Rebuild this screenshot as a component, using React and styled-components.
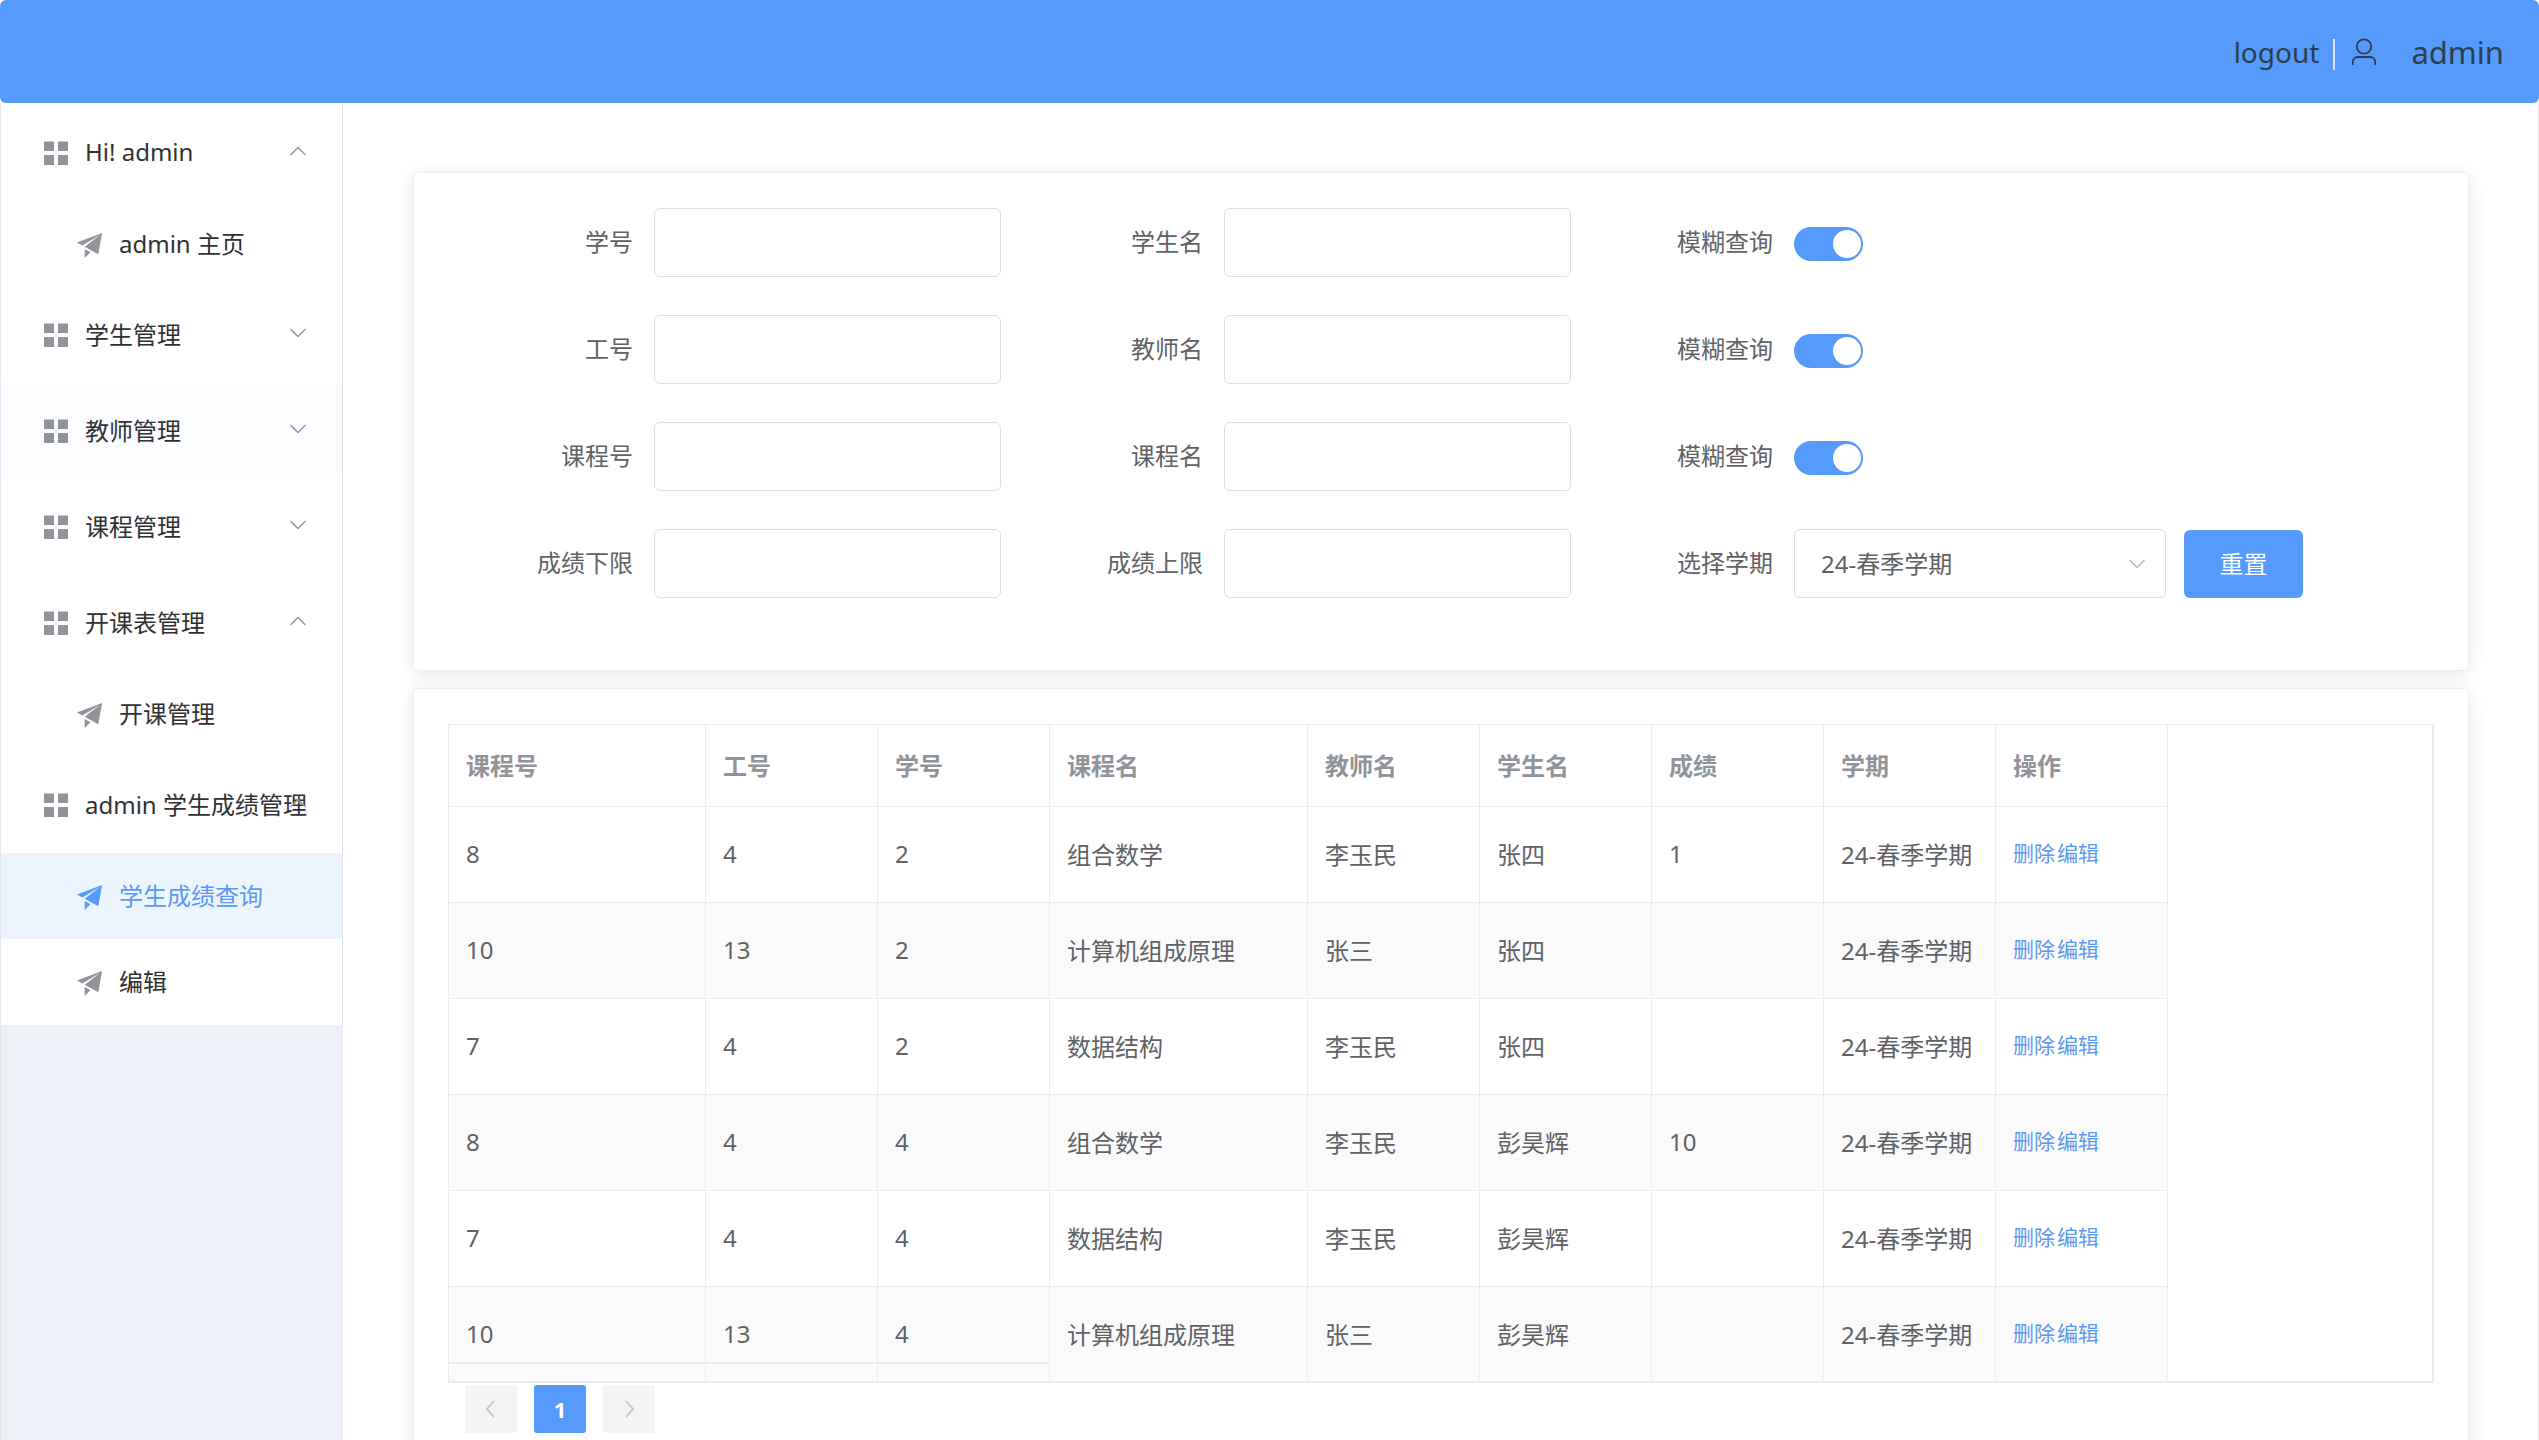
import React, { useState } from 'react'
import styled, { createGlobalStyle } from 'styled-components'

const menu = [
    { title: 'Hi! admin', open: true, items: ['admin 主页'] },
    { title: '学生管理', items: [] },
    { title: '教师管理', highlighted: true, items: [] },
    { title: '课程管理', items: [] },
    { title: '开课表管理', open: true, items: ['开课管理'] },
    { title: 'admin 学生成绩管理', open: true, items: ['学生成绩查询', '编辑'] },
]

const filters = [
    ['学号', '学生名'],
    ['工号', '教师名'],
    ['课程号', '课程名'],
    ['成绩下限', '成绩上限'],
]

const columns = [
    { label: '课程号', width: 257 },
    { label: '工号', width: 172 },
    { label: '学号', width: 172 },
    { label: '课程名', width: 258 },
    { label: '教师名', width: 172 },
    { label: '学生名', width: 172 },
    { label: '成绩', width: 172 },
    { label: '学期', width: 172 },
    { label: '操作', width: 172 },
]

const grades = [
    ['8', '4', '2', '组合数学', '李玉民', '张四', '1', '24-春季学期'],
    ['10', '13', '2', '计算机组成原理', '张三', '张四', '', '24-春季学期'],
    ['7', '4', '2', '数据结构', '李玉民', '张四', '', '24-春季学期'],
    ['8', '4', '4', '组合数学', '李玉民', '彭昊辉', '10', '24-春季学期'],
    ['7', '4', '4', '数据结构', '李玉民', '彭昊辉', '', '24-春季学期'],
    ['10', '13', '4', '计算机组成原理', '张三', '彭昊辉', '', '24-春季学期'],
]

const GridIcon = () => (
    <svg width="24" height="24" viewBox="0 0 24 24" fill="currentColor" aria-hidden="true">
        <rect x="0" y="0.500" width="10" height="9.500" rx="0.5" />
        <rect x="14" y="0.500" width="10" height="9.500" rx="0.5" />
        <rect x="0" y="14" width="10" height="10" rx="0.5" />
        <rect x="14" y="14" width="10" height="10" rx="0.5" />
    </svg>
)

const PlaneIcon = () => (
    <svg width="31" height="31" viewBox="0 0 1024 1024" fill="currentColor" aria-hidden="true">
        <path d="M64 448l832-320-128 704-446.080-243.328L832 192 242.816 545.472 64 448zm256 512V657.024L512 768 320 960z" />
    </svg>
)

const UserIcon = () => (
    <svg width="26" height="28" viewBox="0 0 26 28" fill="none" stroke="currentColor" strokeWidth="1.8" aria-hidden="true">
        <circle cx="13" cy="8.500" r="7.200" />
        <path d="M1.800 27v-3a5 5 0 0 1 5-5h12.400a5 5 0 0 1 5 5v3" />
    </svg>
)

const Chevron = () => (
    <svg width="18" height="10" viewBox="0 0 18 10" fill="none" stroke="currentColor" strokeWidth="1.4" aria-hidden="true">
        <path d="M1.500 1l7.500 7.500L16.500 1" />
    </svg>
)

const PagerArrow = ({ d }) => (
    <svg width="12" height="18" viewBox="0 0 12 18" fill="none" stroke="currentColor" strokeWidth="1.8" aria-hidden="true">
        <path d={d} />
    </svg>
)

function SideMenu() {
    return (
        <Sidebar>
            <Menu>
                {menu.map(({ title, open, highlighted, items }) => (
                    <React.Fragment key={title}>
                        <MenuTitle type="button" aria-expanded={!!open} $highlighted={highlighted}>
                            <GridIcon />
                            <MenuText>{title}</MenuText>
                            <MenuArrow $open={open}><Chevron /></MenuArrow>
                        </MenuTitle>
                        {items.map((item) => (
                            <MenuItem key={item} href="#" $active={item === '学生成绩查询'}>
                                <PlaneIcon />
                                <MenuText>{item}</MenuText>
                            </MenuItem>
                        ))}
                    </React.Fragment>
                ))}
            </Menu>
        </Sidebar>
    )
}

function SearchForm() {
    const [fuzzy, setFuzzy] = useState([true, true, true])

    const toggle = (i) => setFuzzy(fuzzy.map((on, n) => (n === i ? !on : on)))

    return (
        <Form onSubmit={(e) => e.preventDefault()}>
            {filters.map(([left, right], i) => (
                <FormRow key={left}>
                    <Field>
                        <Label htmlFor={`left${i}`}>{left}</Label>
                        <TextInput id={`left${i}`} type="text" />
                    </Field>
                    <Field>
                        <Label htmlFor={`right${i}`}>{right}</Label>
                        <TextInput id={`right${i}`} type="text" />
                    </Field>
                    {i < 3 ? (
                        <Field>
                            <Label htmlFor={`fuzzy${i}`}>模糊查询</Label>
                            <Switch id={`fuzzy${i}`} type="checkbox" role="switch" checked={fuzzy[i]} onChange={() => toggle(i)} />
                        </Field>
                    ) : (
                        <Field>
                            <Label htmlFor="term">选择学期</Label>
                            <SelectWrap>
                                <Select id="term" defaultValue="24-春季学期">
                                    <option>24-春季学期</option>
                                </Select>
                                <SelectArrow><Chevron /></SelectArrow>
                            </SelectWrap>
                            <ResetButton type="reset">重置</ResetButton>
                        </Field>
                    )}
                </FormRow>
            ))}
        </Form>
    )
}

function GradeTable() {
    return (
        <TableWrap>
            <Table>
                <colgroup>
                    {columns.map(({ label, width }) => <col key={label} width={width} />)}
                </colgroup>
                <thead>
                    <tr>
                        {columns.map(({ label }) => <th key={label} scope="col">{label}</th>)}
                    </tr>
                </thead>
                <tbody>
                    {grades.map((row, i) => (
                        <Row key={i}>
                            {row.map((value, n) => <td key={n}>{value}</td>)}
                            <td>
                                <Actions>
                                    <TextButton type="button">删除</TextButton>
                                    <TextButton type="button">编辑</TextButton>
                                </Actions>
                            </td>
                        </Row>
                    ))}
                </tbody>
            </Table>
        </TableWrap>
    )
}

function App() {
    return (
        <Page>
            <GlobalStyle />
            <Header>
                <Logout href="#">logout</Logout>
                <Divider />
                <UserIcon />
                <UserName>admin</UserName>
            </Header>
            <Body>
                <SideMenu />
                <Main>
                    <Card>
                        <SearchForm />
                    </Card>
                    <Card>
                        <GradeTable />
                        <Pagination aria-label="pagination">
                            <PageButton type="button" disabled aria-label="previous"><PagerArrow d="M9 1L2 9l7 8" /></PageButton>
                            <PageButton type="button" $active>1</PageButton>
                            <PageButton type="button" disabled aria-label="next"><PagerArrow d="M3 1l7 8-7 8" /></PageButton>
                        </Pagination>
                    </Card>
                </Main>
            </Body>
        </Page>
    )
}

export default App;

const GlobalStyle = createGlobalStyle`
    * {
        box-sizing: border-box;
    }
    body {
        margin: 0;
        background-color: white;
    }
    body, button, input, select {
        font-family: 'Noto Sans', 'Noto Sans CJK SC', sans-serif;
        font-size: 24px;
    }
    svg {
        display: block;
        flex-shrink: 0;
    }
`

const Page = styled.div`
    display: flex;
    flex-direction: column;
    height: 100vh;
    overflow: hidden;
`

const Header = styled.header`
    display: flex;
    align-items: center;
    justify-content: flex-end;
    flex-shrink: 0;
    height: 103px;
    padding-right: 35px;
    border-radius: 6px;
    background-color: #569afb;
    color: #2c3e50;
`

const Logout = styled.a`
    font-size: 28px;
    color: inherit;
    text-decoration: none;
`

const Divider = styled.span`
    width: 2px;
    height: 31px;
    margin: 6px 16px 0 14px;
    background-color: #d5e6fd;
`

const UserName = styled.span`
    margin-left: 34px;
    font-size: 31px;
`

const Body = styled.div`
    display: flex;
    flex: 1;
    min-height: 0;
    border: solid #e6e6e6;
    border-width: 0 1px;
`

const Sidebar = styled.aside`
    width: 342px;
    flex-shrink: 0;
    background-color: #edf1f7;
`

const Menu = styled.nav`
    padding-top: 2px;
    border-right: 1px solid #e1e2e4;
    background-color: white;
`

const MenuTitle = styled.button`
    position: relative;
    display: flex;
    align-items: center;
    gap: 17px;
    width: 100%;
    height: 96px;
    padding: 0 0 0 43px;
    border: none;
    background-color: ${({ $highlighted }) => ($highlighted ? '#fafcff' : 'transparent')};
    color: #303133;
    white-space: nowrap;
    cursor: pointer;

    svg {
        color: #909399;
    }
`

const MenuText = styled.span`
    padding-bottom: 4px;
`

const MenuArrow = styled.span`
    position: absolute;
    right: 35px;
    top: 41px;
    transform: ${({ $open }) => ($open ? 'rotate(180deg)' : 'none')};
`

const MenuItem = styled.a`
    display: flex;
    align-items: center;
    gap: 13px;
    height: 86px;
    padding-left: 74px;
    background-color: ${({ $active }) => ($active ? '#ecf5fe' : 'transparent')};
    color: ${({ $active }) => ($active ? '#5c98ee' : '#303133')};
    text-decoration: none;

    svg {
        color: ${({ $active }) => ($active ? '#569afb' : '#909399')};
    }
`

const Main = styled.main`
    flex: 1;
    min-width: 0;
    padding: 69px 69px 0 70px;
    overflow: hidden;
`

const Card = styled.section`
    padding: 35px 34px;
    margin-bottom: 17px;
    border: 1px solid #ebedf0;
    border-radius: 6px;
    background-color: white;
    box-shadow: 0 3px 20px rgba(0, 0, 0, 0.1);
`

const Form = styled.form`
    color: #606266;
`

const FormRow = styled.div`
    display: flex;
    gap: 17px;
    margin-bottom: 38px;

    &:last-child {
        margin-bottom: 37px;
    }
`

const Field = styled.div`
    display: flex;
    align-items: center;
    height: 69px;
`

const Label = styled.label`
    width: 206px;
    padding: 0 21px 4px 0;
    text-align: right;
`

const TextInput = styled.input`
    width: 347px;
    height: 69px;
    padding: 0 26px;
    border: 1px solid #dcdee2;
    border-radius: 6px;
    background-color: white;
    color: #606266;
    outline: none;
`

const Switch = styled.input`
    appearance: none;
    display: flex;
    align-items: center;
    justify-content: ${({ checked }) => (checked ? 'flex-end' : 'flex-start')};
    width: 69px;
    height: 34px;
    margin: 2px 0 0;
    padding: 0 2px;
    border-radius: 17px;
    background-color: ${({ checked }) => (checked ? '#569afb' : '#dcdfe6')};
    cursor: pointer;

    &::before {
        content: '';
        width: 28px;
        height: 28px;
        border-radius: 50%;
        background-color: white;
    }
`

const SelectWrap = styled.div`
    position: relative;
    margin-right: 18px;
`

const Select = styled.select`
    appearance: none;
    display: block;
    width: 372px;
    height: 69px;
    padding: 0 52px 0 26px;
    border: 1px solid #dcdee2;
    border-radius: 6px;
    background-color: white;
    color: #606266;
`

const SelectArrow = styled.span`
    position: absolute;
    right: 20px;
    top: 30px;
    color: #b4b8c0;
    pointer-events: none;
`

const ResetButton = styled.button`
    width: 119px;
    height: 68px;
    padding: 0 0 2px;
    border: none;
    border-radius: 6px;
    background-color: #569afb;
    color: white;
    cursor: pointer;
`

const TableWrap = styled.div`
    max-height: 659px;
    overflow: hidden;
    border: 1px solid #e9ebee;
    border-width: 1px 2px 2px 1px;
`

const Table = styled.table`
    width: 1719px;
    table-layout: fixed;
    border-spacing: 0;
    color: #606266;

    th, td {
        height: 96px;
        padding: 0 17px 2px;
        border: solid #ebedf0;
        border-width: 0 1px 1px 0;
        text-align: left;
        white-space: nowrap;
    }

    th {
        height: 82px;
        color: #909399;
        font-weight: bold;
    }
`

const Row = styled.tr`
    &:nth-child(even) {
        background-color: #fafafa;
    }

    /* edge of the fixed columns above the scroll area */
    &:last-child td:nth-child(-n + 3) {
        background-image: linear-gradient(#e9ebf0 2px, #fafafc 2px);
        background-position: 0 75px;
        background-repeat: no-repeat;
    }
`

const Actions = styled.div`
    display: flex;
    gap: 2px;
    padding-bottom: 4px;
`

const TextButton = styled.button`
    padding: 0;
    border: none;
    background: none;
    color: #5c98ee;
    font-size: 21px;
    cursor: pointer;
`

const Pagination = styled.nav`
    display: flex;
    gap: 17px;
    padding: 2px 17px 0;
`

const PageButton = styled.button`
    display: grid;
    place-items: center;
    width: 52px;
    height: 48px;
    padding: 0;
    border: none;
    border-radius: 3px;
    background-color: ${({ $active }) => ($active ? '#569afb' : '#f4f4f5')};
    color: ${({ $active }) => ($active ? 'white' : '#c0c4cc')};
    font-size: 22px;
    font-weight: bold;
`
